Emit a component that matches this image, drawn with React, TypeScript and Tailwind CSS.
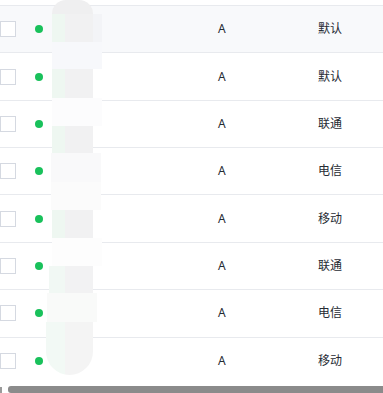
import React from "react";

const rows = ["默认", "默认", "联通", "电信", "移动", "联通", "电信", "移动"];

function Strip({ h }: { h: number }) {
  return (
    <div className="flex" style={{ height: h }}>
      <div className="w-[13px] bg-[#eef7f1]" />
      <div className="w-[28px] bg-[#f1f1f2]" />
    </div>
  );
}

function Block({ h, bg, w = 50, ml = 0 }: { h: number; bg: string; w?: number; ml?: number }) {
  return <div style={{ height: h, background: bg, width: w, marginLeft: ml }} />;
}

export default function App() {
  return (
    <div
      className="relative w-[383px] h-[393px] overflow-hidden bg-white text-[12px] text-[#262b33]"
      style={{ fontFamily: '"Noto Sans", "Noto Sans CJK SC", sans-serif' }}
    >
      <div className="h-[5px]" />
      {rows.map((t, i) => (
        <div
          key={i}
          className={`flex items-center h-[47.36px] border-t border-[#e8eaee] ${i === 0 ? "bg-[#f8f9fb]" : "bg-white"}`}
        >
          <div className="w-[35px] shrink-0">
            <div className="w-4 h-4 border border-[#d5d9e1] bg-white" />
          </div>
          <div className="w-[183px] shrink-0">
            <div className="w-2 h-2 rounded-full bg-[#19c15b]" />
          </div>
          <div className="w-[100px] shrink-0">A</div>
          <div>{t}</div>
        </div>
      ))}
      <div className="flex items-center mt-[2px] h-[7px]">
        <div className="w-[2px] h-[6px] mt-[1px] bg-[#9a9a9a]" />
        <div className="ml-[6px] flex-1 h-[7px] bg-[#8b8b8b] rounded-l-[3px]" />
      </div>

      {/* blurred redaction overlay */}
      <div className="absolute left-[52px] top-0 w-[50px]">
        <div className="flex">
          <div className="w-[41px] h-[14px] rounded-t-[20px] bg-[#efeff0]" />
        </div>
        <div className="flex">
          <Strip h={28} />
          <div className="w-[9px] h-[28px] bg-[#f3f4f7]" />
        </div>
        <Block h={27} bg="#f7f8fb" />
        <Strip h={29} />
        <Block h={28} bg="#fcfcfd" />
        <Strip h={27} />
        <Block h={29} bg="#f9f9fa" ml={-1} />
        <Block h={28} bg="#fbfbfb" ml={-1} />
        <Strip h={28} />
        <Block h={28} bg="#fdfdfd" />
        <div style={{ height: 27, marginLeft: -3 }} className="flex">
          <div className="w-[16px] bg-[#f1f8f4]" />
          <div className="w-[28px] bg-[#f2f2f3]" />
        </div>
        <Block h={29} bg="#f9faf9" ml={-5} w={50} />
        <div className="flex ml-[-6px] h-[53px] w-[47px] rounded-b-[24px] overflow-hidden">
          <div className="w-[19px] bg-[#f2f9f5]" />
          <div className="w-[28px] bg-[#f4f4f4]" />
        </div>
      </div>
    </div>
  );
}
